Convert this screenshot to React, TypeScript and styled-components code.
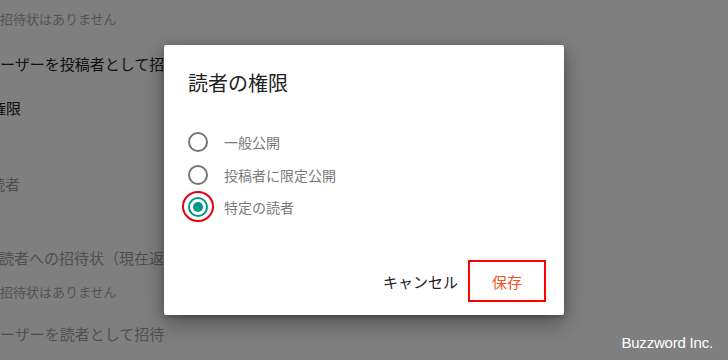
import styled, { createGlobalStyle } from "styled-components";

const GlobalStyle = createGlobalStyle`
  html, body {
    margin: 0;
    padding: 0;
    width: 728px;
    height: 360px;
    overflow: hidden;
    background: #ffffff;
    font-family: "Noto Sans CJK JP", "Noto Sans", sans-serif;
  }
`;

export const Page = styled.div`
  position: relative;
  width: 728px;
  height: 360px;
  overflow: hidden;
  background: #ffffff;
  padding-top: 9px;
  box-sizing: border-box;
`;

export const Line = styled.div<{ $shift?: number; $gap?: number; $tone?: "dark" | "muted" | "note" }>`
  height: 20px;
  line-height: 20px;
  white-space: nowrap;
  margin-top: ${(props) => props.$gap ?? 0}px;
  margin-left: ${(props) => props.$shift ?? 0}px;
  font-size: ${(props) => (props.$tone === "note" ? "13px" : "15px")};
  color: ${(props) =>
    props.$tone === "dark" ? "#212121" : props.$tone === "note" ? "#a8a8a8" : "#9e9e9e"};
`;

export const Overlay = styled.div`
  position: absolute;
  inset: 0;
  background: rgba(0, 0, 0, 0.5);
  display: flex;
  align-items: center;
  justify-content: center;
`;

export const Dialog = styled.div`
  width: 400px;
  background: #ffffff;
  border-radius: 2px;
  box-shadow: 0 8px 24px rgba(0, 0, 0, 0.35), 0 2px 6px rgba(0, 0, 0, 0.25);
  display: flex;
  flex-direction: column;
  padding-top: 24px;
  box-sizing: border-box;
`;

export const Title = styled.div`
  padding: 0 24px;
  font-size: 20px;
  line-height: 28px;
  color: #212121;
`;

export const Options = styled.div`
  display: flex;
  flex-direction: column;
  margin-top: 29px;
  padding: 0 24px;
`;

export const Option = styled.label`
  display: flex;
  align-items: center;
  gap: 16px;
  height: 32.5px;
  font-size: 14px;
  color: #7a7a7a;
`;

export const RadioWrap = styled.span`
  position: relative;
  width: 20px;
  height: 20px;
  display: flex;
  align-items: center;
  justify-content: center;
`;

export const Radio = styled.span<{ $checked?: boolean }>`
  width: 20px;
  height: 20px;
  border-radius: 50%;
  box-sizing: border-box;
  border: 2px solid ${(props) => (props.$checked ? "#009688" : "#757575")};
  display: flex;
  align-items: center;
  justify-content: center;

  &::after {
    content: "";
    width: 10px;
    height: 10px;
    border-radius: 50%;
    background: ${(props) => (props.$checked ? "#009688" : "transparent")};
  }
`;

export const Highlight = styled.span`
  position: absolute;
  left: -6px;
  top: -6px;
  width: 32px;
  height: 31px;
  box-sizing: border-box;
  border: 2px solid #e60012;
  border-radius: 50%;
`;

export const Footer = styled.div`
  display: flex;
  justify-content: flex-end;
  align-items: center;
  margin-top: 36.5px;
  padding: 0 18px 13px;
`;

export const TextButton = styled.button<{ $primary?: boolean; $marked?: boolean }>`
  height: 42px;
  min-width: ${(props) => (props.$primary ? "78px" : "auto")};
  padding: 0 8px;
  box-sizing: border-box;
  background: transparent;
  border: 2px solid ${(props) => (props.$marked ? "#ff0000" : "transparent")};
  font-family: "Noto Sans CJK JP", "Noto Sans", sans-serif;
  font-size: 15px;
  color: ${(props) => (props.$primary ? "#f4511e" : "#212121")};
  cursor: pointer;
`;

export const Watermark = styled.div`
  position: absolute;
  right: 15px;
  bottom: 9px;
  font-family: "Liberation Sans", Arial, sans-serif;
  font-size: 15px;
  color: #ffffff;
  letter-spacing: -0.2px;
`;

const options = [
  { label: "一般公開", checked: false },
  { label: "投稿者に限定公開", checked: false },
  { label: "特定の読者", checked: true },
];

export default function App() {
  return (
    <>
      <GlobalStyle />
      <Page>
        <Line $tone="note">招待状はありません</Line>
        <Line $tone="dark" $gap={25} $shift={-15}>
          ユーザーを投稿者として招待
        </Line>
        <Line $tone="dark" $gap={24} $shift={-54}>
          読者の権限
        </Line>
        <Line $tone="muted" $gap={56} $shift={-55}>
          特定の読者
        </Line>
        <Line $tone="muted" $gap={54} $shift={-61}>
          保留中の読者への招待状（現在返信待ち）
        </Line>
        <Line $tone="note" $gap={14}>
          招待状はありません
        </Line>
        <Line $tone="muted" $gap={22} $shift={-15}>
          ユーザーを読者として招待
        </Line>

        <Overlay>
          <Dialog>
            <Title>読者の権限</Title>
            <Options>
              {options.map((o) => (
                <Option key={o.label}>
                  <RadioWrap>
                    <Radio $checked={o.checked} />
                    {o.checked && <Highlight />}
                  </RadioWrap>
                  {o.label}
                </Option>
              ))}
            </Options>
            <Footer>
              <TextButton>キャンセル</TextButton>
              <TextButton $primary $marked>
                保存
              </TextButton>
            </Footer>
          </Dialog>
          <Watermark>Buzzword Inc.</Watermark>
        </Overlay>
      </Page>
    </>
  );
}
